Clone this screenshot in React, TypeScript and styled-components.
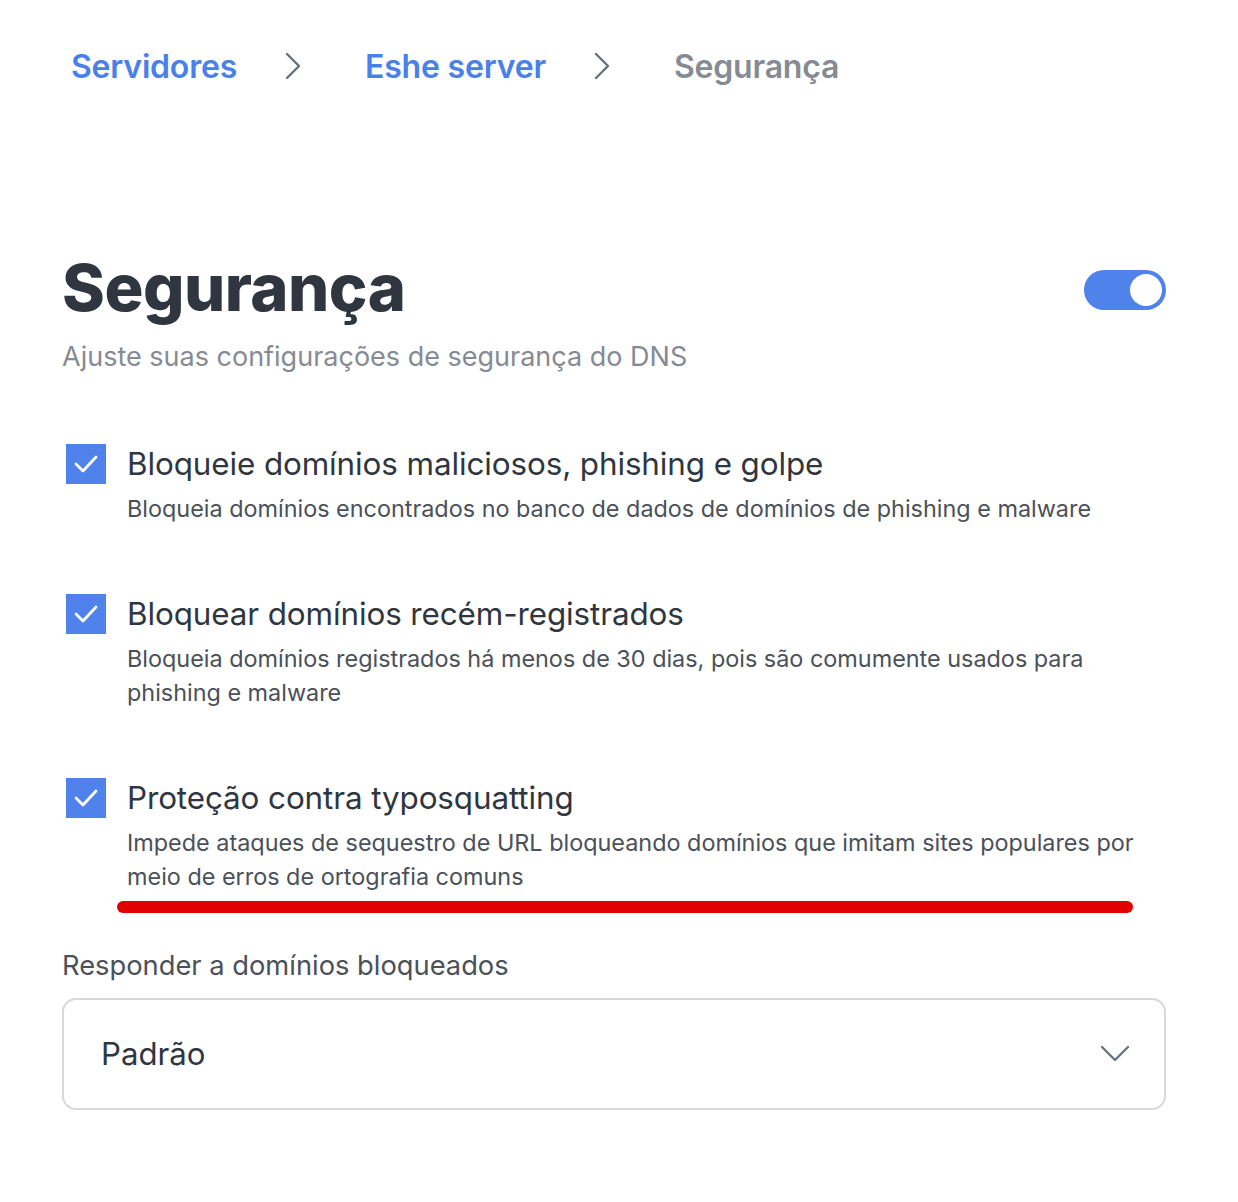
import React from "react";
import styled, { createGlobalStyle } from "styled-components";

const Global = createGlobalStyle`
  html, body { margin: 0; padding: 0; background: #ffffff; }
  body { font-family: Inter, "Noto Sans", sans-serif; -webkit-font-smoothing: antialiased; }
  * { box-sizing: border-box; }
`;

const Page = styled.div`
  width: 1238px;
  padding: 0 72px 0 62px;
  display: flex;
  flex-direction: column;
`;

const Breadcrumb = styled.nav`
  display: flex;
  align-items: center;
  height: 132px;
  padding-left: 9px;
`;

const Crumb = styled.span<{ $current?: boolean }>`
  font-size: 32px;
  font-weight: 600;
  color: ${(p) => (p.$current ? "#868b93" : "#4a80ea")};
  letter-spacing: -0.2px;
`;

const Sep = styled.span`
  display: flex;
  align-items: center;
  margin: 0 64px 0 48px;
`;

const Header = styled.div`
  display: flex;
  justify-content: space-between;
  align-items: flex-start;
  margin-top: 117px;
`;

const TitleBlock = styled.div`
  display: flex;
  flex-direction: column;
`;

const Title = styled.h1`
  margin: 0;
  font-size: 65px;
  font-weight: 800;
  line-height: 78px;
  color: #2f363f;
  letter-spacing: -0.5px;
`;

const Subtitle = styled.p`
  margin: 13px 0 0;
  font-size: 27px;
  line-height: 34px;
  color: #868b93;
`;

const Toggle = styled.div`
  width: 82px;
  height: 40px;
  border-radius: 20px;
  background: #4f82ea;
  display: flex;
  align-items: center;
  justify-content: flex-end;
  padding: 0 4px;
  margin-top: 21px;
`;

const Knob = styled.div`
  width: 32px;
  height: 32px;
  border-radius: 50%;
  background: #fff;
`;

const Options = styled.div`
  display: flex;
  flex-direction: column;
  gap: 68px;
  margin-top: 70px;
`;

const Option = styled.div`
  display: flex;
  align-items: flex-start;
  gap: 21px;
  padding-left: 4px;
`;

const Check = styled.div`
  width: 40px;
  height: 40px;
  background: #4f82ea;
  flex: none;
  display: flex;
  align-items: center;
  justify-content: center;
`;

const OptionText = styled.div`
  display: flex;
  flex-direction: column;
  gap: 8px;
`;

const OptionTitle = styled.div`
  font-size: 31.4px;
  line-height: 40px;
  color: #2f363f;
  letter-spacing: -0.1px;
`;

const OptionDesc = styled.div`
  font-size: 23.4px;
  line-height: 34px;
  color: #4b5159;
`;

const RedLine = styled.div`
  height: 12px;
  border-radius: 6px;
  background: #e00000;
  margin: 7px 33px 0 55px;
`;

const FieldLabel = styled.div`
  margin-top: 36px;
  font-size: 27.3px;
  line-height: 34px;
  color: #4b5159;
`;

const Select = styled.div`
  margin-top: 15px;
  height: 112px;
  border: 2px solid #d6d8dc;
  border-radius: 14px;
  display: flex;
  align-items: center;
  justify-content: space-between;
  padding: 0 34px 0 37px;
`;

const SelectValue = styled.span`
  font-size: 31.2px;
  color: #2f363f;
`;

const Chevron = () => (
  <svg width="16" height="28" viewBox="0 0 16 28" fill="none">
    <path d="M2 2 L14 14 L2 26" stroke="#6b7078" strokeWidth="2.4" strokeLinecap="round" strokeLinejoin="round" />
  </svg>
);

const CheckIcon = () => (
  <svg width="24" height="18" viewBox="0 0 24 18" fill="none">
    <path d="M2 9 L9 16 L22 2" stroke="#fff" strokeWidth="2.8" strokeLinecap="round" strokeLinejoin="round" />
  </svg>
);

const Down = () => (
  <svg width="30" height="18" viewBox="0 0 30 18" fill="none">
    <path d="M2 2 L15 15 L28 2" stroke="#6e737b" strokeWidth="2.4" strokeLinecap="round" strokeLinejoin="round" />
  </svg>
);

const options = [
  {
    title: "Bloqueie domínios maliciosos, phishing e golpe",
    desc: "Bloqueia domínios encontrados no banco de dados de domínios de phishing e malware",
  },
  {
    title: "Bloquear domínios recém-registrados",
    desc: "Bloqueia domínios registrados há menos de 30 dias, pois são comumente usados para phishing e malware",
  },
  {
    title: "Proteção contra typosquatting",
    desc: "Impede ataques de sequestro de URL bloqueando domínios que imitam sites populares por meio de erros de ortografia comuns",
  },
];

export default function App() {
  return (
    <Page>
      <Global />
      <Breadcrumb>
        <Crumb>Servidores</Crumb>
        <Sep><Chevron /></Sep>
        <Crumb>Eshe server</Crumb>
        <Sep><Chevron /></Sep>
        <Crumb $current>Segurança</Crumb>
      </Breadcrumb>
      <Header>
        <TitleBlock>
          <Title>Segurança</Title>
          <Subtitle>Ajuste suas configurações de segurança do DNS</Subtitle>
        </TitleBlock>
        <Toggle><Knob /></Toggle>
      </Header>
      <Options>
        {options.map((o) => (
          <Option key={o.title}>
            <Check><CheckIcon /></Check>
            <OptionText>
              <OptionTitle>{o.title}</OptionTitle>
              <OptionDesc>{o.desc}</OptionDesc>
            </OptionText>
          </Option>
        ))}
      </Options>
      <RedLine />
      <FieldLabel>Responder a domínios bloqueados</FieldLabel>
      <Select>
        <SelectValue>Padrão</SelectValue>
        <Down />
      </Select>
    </Page>
  );
}
